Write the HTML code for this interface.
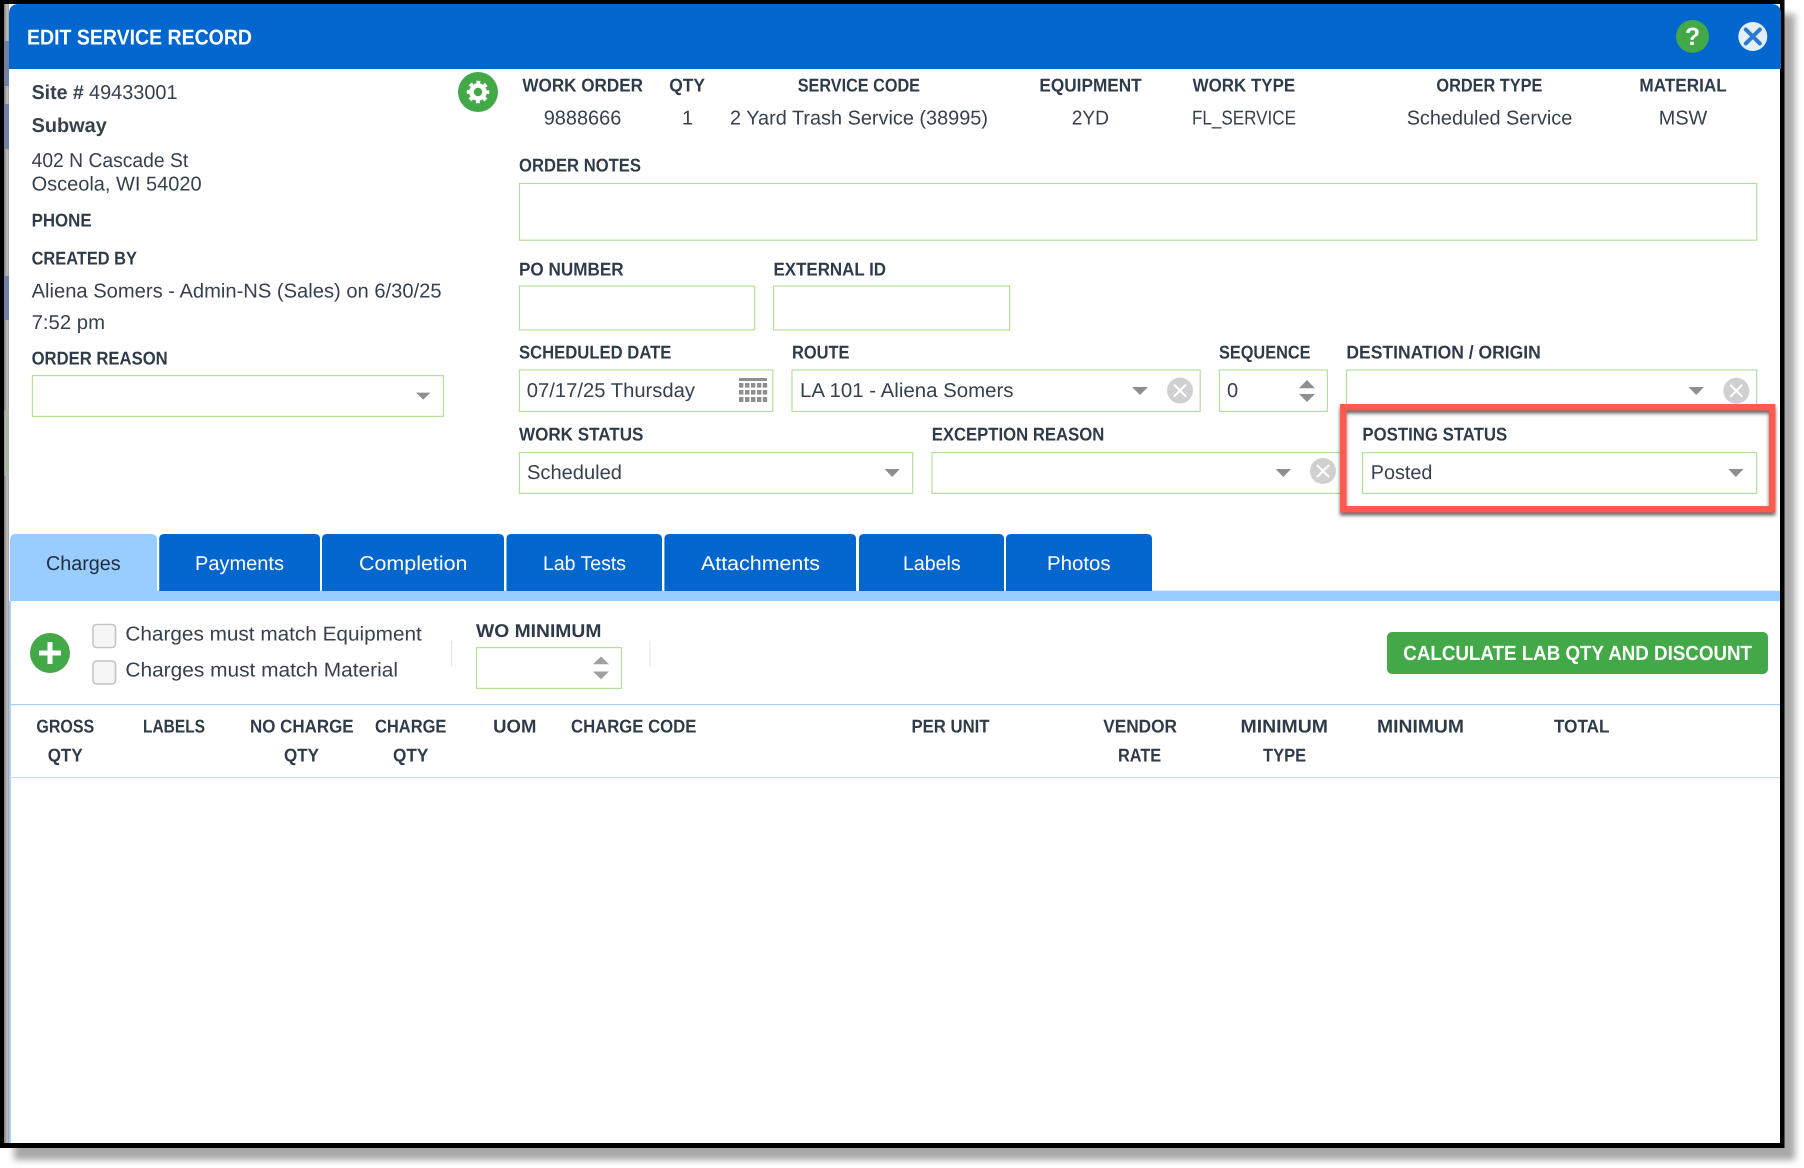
<!DOCTYPE html>
<html lang="en">
<head>
<meta charset="utf-8">
<title>Edit Service Record</title>
<style>
html,body{margin:0;padding:0;background:#fff;width:1804px;height:1168px;overflow:hidden}
svg{display:block}
text{font-family:"Liberation Sans",sans-serif;text-rendering:geometricPrecision}
.l{font-size:18.5px;font-weight:700;fill:#2f3b48}
.v{font-size:20px;fill:#36414d}
.b{font-size:20px;font-weight:700;fill:#36414d}
.t{font-size:20px;fill:#fff}
.i{fill:#fff;stroke:#b5de9f;stroke-width:1.2}
.a{fill:#8f8f8f}
.c{fill:#d0d0d0}
.x{stroke:#fff;stroke-width:2;stroke-linecap:round}
</style>
</head>
<body>
<svg xmlns="http://www.w3.org/2000/svg" width="1804" height="1168" viewBox="0 0 1804 1168">
<defs>
<filter id="blur" x="-5%" y="-5%" width="110%" height="110%"><feGaussianBlur stdDeviation="3.5"/></filter>
<filter id="ds" x="-5%" y="-10%" width="110%" height="125%"><feDropShadow dx="0" dy="3" stdDeviation="1.8" flood-color="#333" flood-opacity=".75"/></filter>
<linearGradient id="strip" x1="0" x2="1" y1="0" y2="0"><stop offset="0" stop-color="#7c7c7c"/><stop offset=".55" stop-color="#bdbdbd"/><stop offset="1" stop-color="#969696"/></linearGradient>
</defs>

<!-- outer shadow and frame -->
<rect x="14" y="14" width="1781" height="1146" fill="#a8a8a8" filter="url(#blur)"/>
<rect x="0" y="0" width="1784.5" height="1148" fill="#000"/>
<rect x="4" y="4" width="5.5" height="1139" fill="url(#strip)"/>
<rect x="4.5" y="41" width="5" height="45" fill="#6f82a4"/>
<rect x="4.5" y="104" width="5" height="45" fill="#6f82a4"/>
<rect x="4.5" y="276" width="5" height="44" fill="#6f82a4"/>
<rect x="4.5" y="410" width="5" height="66" fill="#a9b5a6"/>
<rect x="9" y="4" width="1771" height="1139" fill="#fff"/>
<rect x="9" y="601" width="2" height="542" fill="#a6d0fb"/>

<!-- header -->
<path d="M9 69V14Q9 4 19 4H1771Q1781 4 1781 14V69Z" fill="#0266cf"/>
<text x="27" y="44.5" font-size="21.5" font-weight="700" fill="#fff" textLength="225" lengthAdjust="spacingAndGlyphs">EDIT SERVICE RECORD</text>
<circle cx="1692.5" cy="36.4" r="16.5" fill="#43a847"/>
<text x="1692.5" y="45" font-size="25" font-weight="700" fill="#fff" text-anchor="middle">?</text>
<circle cx="1752.8" cy="36.5" r="14.5" fill="#e3eef9"/>
<path d="M1745.8 29.5L1759.8 43.5M1759.8 29.5L1745.8 43.5" stroke="#2a7ad2" stroke-width="4" stroke-linecap="round"/>

<!-- left column -->
<text class="b" x="31.6" y="99" textLength="52.2" lengthAdjust="spacingAndGlyphs">Site #</text>
<text class="v" x="89" y="99" textLength="88.5" lengthAdjust="spacingAndGlyphs">49433001</text>
<text class="b" x="31.6" y="132" textLength="75.2" lengthAdjust="spacingAndGlyphs">Subway</text>
<text class="v" x="31.6" y="167" textLength="156.6" lengthAdjust="spacingAndGlyphs">402 N Cascade St</text>
<text class="v" x="31.6" y="190.6" textLength="170" lengthAdjust="spacingAndGlyphs">Osceola, WI 54020</text>
<text class="l" x="31.6" y="226.7" textLength="60" lengthAdjust="spacingAndGlyphs">PHONE</text>
<text class="l" x="31.6" y="264.7" textLength="105.3" lengthAdjust="spacingAndGlyphs">CREATED BY</text>
<text class="v" x="31.6" y="297.5" textLength="410" lengthAdjust="spacingAndGlyphs">Aliena Somers - Admin-NS (Sales) on 6/30/25</text>
<text class="v" x="31.6" y="329" textLength="73.4" lengthAdjust="spacingAndGlyphs">7:52 pm</text>
<text class="l" x="31.6" y="364.7" textLength="136.1" lengthAdjust="spacingAndGlyphs">ORDER REASON</text>
<rect class="i" x="32.4" y="375.6" width="411" height="40.8"/>
<path class="a" d="M416 392.6H430.5L423.2 399.6Z"/>

<!-- gear -->
<circle cx="478" cy="92" r="20" fill="#43a847"/>
<circle cx="478" cy="92" r="6.5" fill="none" stroke="#fff" stroke-width="4.6"/>
<circle cx="478" cy="92" r="9.6" fill="none" stroke="#fff" stroke-width="3.4" stroke-dasharray="3.8 3.74" stroke-dashoffset="1.9"/>

<!-- top info row -->
<text class="l" x="522.4" y="91.7" textLength="120.6" lengthAdjust="spacingAndGlyphs">WORK ORDER</text>
<text class="l" x="669.2" y="91.7" textLength="35.8" lengthAdjust="spacingAndGlyphs">QTY</text>
<text class="l" x="797.7" y="91.7" textLength="122.3" lengthAdjust="spacingAndGlyphs">SERVICE CODE</text>
<text class="l" x="1039.4" y="91.7" textLength="102.3" lengthAdjust="spacingAndGlyphs">EQUIPMENT</text>
<text class="l" x="1192.6" y="91.7" textLength="102.6" lengthAdjust="spacingAndGlyphs">WORK TYPE</text>
<text class="l" x="1436.4" y="91.7" textLength="106" lengthAdjust="spacingAndGlyphs">ORDER TYPE</text>
<text class="l" x="1639.4" y="91.7" textLength="87.4" lengthAdjust="spacingAndGlyphs">MATERIAL</text>
<text class="v" x="543.7" y="124.7" textLength="77.6" lengthAdjust="spacingAndGlyphs">9888666</text>
<text class="v" x="682" y="124.7">1</text>
<text class="v" x="730" y="124.7" textLength="258" lengthAdjust="spacingAndGlyphs">2 Yard Trash Service (38995)</text>
<text class="v" x="1071.7" y="124.7" textLength="37.3" lengthAdjust="spacingAndGlyphs">2YD</text>
<text class="v" x="1192" y="124.7" textLength="104" lengthAdjust="spacingAndGlyphs">FL_SERVICE</text>
<text class="v" x="1406.7" y="124.7" textLength="165.6" lengthAdjust="spacingAndGlyphs">Scheduled Service</text>
<text class="v" x="1658.8" y="124.7" textLength="48.5" lengthAdjust="spacingAndGlyphs">MSW</text>

<!-- notes -->
<text class="l" x="519" y="171.7" textLength="122" lengthAdjust="spacingAndGlyphs">ORDER NOTES</text>
<rect class="i" x="519.4" y="183.4" width="1237.3" height="56.8"/>

<!-- PO / external -->
<text class="l" x="519" y="275.7" textLength="104.6" lengthAdjust="spacingAndGlyphs">PO NUMBER</text>
<rect class="i" x="519.4" y="286" width="235.3" height="44"/>
<text class="l" x="773.5" y="275.7" textLength="112.5" lengthAdjust="spacingAndGlyphs">EXTERNAL ID</text>
<rect class="i" x="773.6" y="286" width="236" height="44"/>

<!-- row: scheduled -->
<text class="l" x="519" y="358.7" textLength="152.4" lengthAdjust="spacingAndGlyphs">SCHEDULED DATE</text>
<rect class="i" x="519.4" y="370" width="253.4" height="41.4"/>
<text class="v" x="526.8" y="397" textLength="168.2" lengthAdjust="spacingAndGlyphs">07/17/25 Thursday</text>
<g fill="#8f8f8f">
<rect x="739" y="378" width="28" height="3"/>
<rect x="739" y="383" width="4.4" height="4.6"/><rect x="745" y="383" width="4.4" height="4.6"/><rect x="751" y="383" width="4.4" height="4.6"/><rect x="757" y="383" width="4.4" height="4.6"/><rect x="762.8" y="383" width="4.4" height="4.6"/>
<rect x="739" y="390" width="4.4" height="4.6"/><rect x="745" y="390" width="4.4" height="4.6"/><rect x="751" y="390" width="4.4" height="4.6"/><rect x="757" y="390" width="4.4" height="4.6"/><rect x="762.8" y="390" width="4.4" height="4.6"/>
<rect x="739" y="397" width="4.4" height="5"/><rect x="745" y="397" width="4.4" height="5"/><rect x="751" y="397" width="4.4" height="5"/><rect x="757" y="397" width="4.4" height="5"/><rect x="762.8" y="397" width="4.4" height="5"/>
</g>

<text class="l" x="792" y="358.7" textLength="57.5" lengthAdjust="spacingAndGlyphs">ROUTE</text>
<rect class="i" x="792" y="370" width="408.2" height="41.4"/>
<text class="v" x="800" y="397" textLength="213.5" lengthAdjust="spacingAndGlyphs">LA 101 - Aliena Somers</text>
<path class="a" d="M1132 387H1148L1140 395Z"/>
<circle class="c" cx="1180" cy="390.5" r="13"/>
<path class="x" d="M1174.5 385L1185.5 396M1185.5 385L1174.5 396"/>

<text class="l" x="1219" y="358.7" textLength="91.5" lengthAdjust="spacingAndGlyphs">SEQUENCE</text>
<rect class="i" x="1219.4" y="370" width="108" height="41.4"/>
<text class="v" x="1227" y="397">0</text>
<path class="a" d="M1299 388.3L1307 380L1315 388.3Z"/>
<path class="a" d="M1299 394H1315L1307 402Z"/>

<text class="l" x="1346.4" y="358.7" textLength="194.4" lengthAdjust="spacingAndGlyphs">DESTINATION / ORIGIN</text>
<rect class="i" x="1346.5" y="370" width="410.2" height="41.4"/>
<path class="a" d="M1688.5 387H1704L1696.2 395Z"/>
<circle class="c" cx="1736.3" cy="390.8" r="13"/>
<path class="x" d="M1730.8 385.3L1741.8 396.3M1741.8 385.3L1730.8 396.3"/>

<!-- row: work status -->
<text class="l" x="519" y="440.7" textLength="124.4" lengthAdjust="spacingAndGlyphs">WORK STATUS</text>
<rect class="i" x="519.4" y="452.6" width="393.3" height="40.8"/>
<text class="v" x="527" y="479" textLength="95" lengthAdjust="spacingAndGlyphs">Scheduled</text>
<path class="a" d="M884.6 469H899.8L892.2 477Z"/>

<text class="l" x="931.7" y="440.7" textLength="172.6" lengthAdjust="spacingAndGlyphs">EXCEPTION REASON</text>
<rect class="i" x="932" y="452.6" width="415" height="40.8"/>
<path class="a" d="M1275.6 469H1291L1283.3 477Z"/>
<circle class="c" cx="1323" cy="471" r="13"/>
<path class="x" d="M1317.5 465.5L1328.5 476.5M1328.5 465.5L1317.5 476.5"/>

<!-- posting status callout -->
<rect x="1343.2" y="407.2" width="429" height="102" fill="#fff"/>
<rect x="1343.2" y="407.2" width="429" height="102" fill="none" stroke="#ff5a4e" stroke-width="6.4" filter="url(#ds)"/>
<text class="l" x="1362.4" y="440.7" textLength="144.8" lengthAdjust="spacingAndGlyphs">POSTING STATUS</text>
<rect class="i" x="1362.5" y="452.6" width="394.2" height="40.8"/>
<text class="v" x="1370.8" y="479" textLength="61.6" lengthAdjust="spacingAndGlyphs">Posted</text>
<path class="a" d="M1728.3 469H1743.5L1735.9 477Z"/>

<!-- tabs -->
<rect x="10" y="590.7" width="1770" height="10.3" fill="#99ccff"/>
<path d="M10 592V540Q10 534 16 534H151Q157 534 157 540V592Z" fill="#99ccff"/>
<g fill="#0266cf">
<path d="M159.2 591V539Q159.2 534 164.2 534H315Q320 534 320 539V591Z"/>
<path d="M322 591V539Q322 534 327 534H499Q504 534 504 539V591Z"/>
<path d="M506.5 591V539Q506.5 534 511.5 534H657Q662 534 662 539V591Z"/>
<path d="M664.4 591V539Q664.4 534 669.4 534H851Q856 534 856 539V591Z"/>
<path d="M859 591V539Q859 534 864 534H999Q1004 534 1004 539V591Z"/>
<path d="M1006 591V539Q1006 534 1011 534H1147Q1152 534 1152 539V591Z"/>
</g>
<text x="46" y="570" font-size="20" fill="#1f2c3c" textLength="74.6" lengthAdjust="spacingAndGlyphs">Charges</text>
<text class="t" x="195" y="570" textLength="89" lengthAdjust="spacingAndGlyphs">Payments</text>
<text class="t" x="359" y="570" textLength="108.5" lengthAdjust="spacingAndGlyphs">Completion</text>
<text class="t" x="543" y="570" textLength="83" lengthAdjust="spacingAndGlyphs">Lab Tests</text>
<text class="t" x="701" y="570" textLength="119" lengthAdjust="spacingAndGlyphs">Attachments</text>
<text class="t" x="903" y="570" textLength="57.6" lengthAdjust="spacingAndGlyphs">Labels</text>
<text class="t" x="1047" y="570" textLength="63.6" lengthAdjust="spacingAndGlyphs">Photos</text>

<!-- charges toolbar -->
<circle cx="50" cy="653" r="20" fill="#43a847"/>
<path d="M39 653H61M50 642V664" stroke="#fff" stroke-width="5"/>
<rect x="93" y="624.5" width="22.5" height="23" rx="3.5" fill="#f6f6f6" stroke="#c4c4c4" stroke-width="1.6"/>
<rect x="93" y="661" width="22.5" height="23" rx="3.5" fill="#f6f6f6" stroke="#c4c4c4" stroke-width="1.6"/>
<text class="v" x="125.4" y="640.7" textLength="296.4" lengthAdjust="spacingAndGlyphs">Charges must match Equipment</text>
<text class="v" x="125.4" y="676.7" textLength="272.6" lengthAdjust="spacingAndGlyphs">Charges must match Material</text>
<rect x="451" y="641" width="1" height="25" fill="#e2e2e2"/>
<rect x="649.5" y="641" width="1" height="25" fill="#e2e2e2"/>
<text class="l" x="476" y="637" textLength="125.4" lengthAdjust="spacingAndGlyphs">WO MINIMUM</text>
<rect class="i" x="476.5" y="647.6" width="145" height="40.8"/>
<path class="a" d="M593 664.3L601 656.5L609 664.3Z" fill-opacity=".85"/>
<path class="a" d="M593 671.5H609L601 679.3Z" fill-opacity=".85"/>

<rect x="1387" y="632" width="381" height="42" rx="5" fill="#43a847"/>
<text x="1403.3" y="660" font-size="20.5" font-weight="700" fill="#fff" textLength="348.7" lengthAdjust="spacingAndGlyphs">CALCULATE LAB QTY AND DISCOUNT</text>

<!-- table header -->
<rect x="10" y="704" width="1770" height="1.2" fill="#a6d0fb"/>
<rect x="10" y="777" width="1770" height="1.2" fill="#c2dcf6"/>
<text class="l" x="36.4" y="732.7" textLength="57.8" lengthAdjust="spacingAndGlyphs">GROSS</text>
<text class="l" x="47.7" y="761.7" textLength="35" lengthAdjust="spacingAndGlyphs">QTY</text>
<text class="l" x="143" y="732.7" textLength="62" lengthAdjust="spacingAndGlyphs">LABELS</text>
<text class="l" x="250" y="732.7" textLength="103.6" lengthAdjust="spacingAndGlyphs">NO CHARGE</text>
<text class="l" x="284" y="761.7" textLength="35" lengthAdjust="spacingAndGlyphs">QTY</text>
<text class="l" x="375" y="732.7" textLength="71.4" lengthAdjust="spacingAndGlyphs">CHARGE</text>
<text class="l" x="393" y="761.7" textLength="35.4" lengthAdjust="spacingAndGlyphs">QTY</text>
<text class="l" x="493.2" y="732.7" textLength="43.2" lengthAdjust="spacingAndGlyphs">UOM</text>
<text class="l" x="571" y="732.7" textLength="125.4" lengthAdjust="spacingAndGlyphs">CHARGE CODE</text>
<text class="l" x="911.5" y="732.7" textLength="78" lengthAdjust="spacingAndGlyphs">PER UNIT</text>
<text class="l" x="1103.2" y="732.7" textLength="73.8" lengthAdjust="spacingAndGlyphs">VENDOR</text>
<text class="l" x="1118" y="761.7" textLength="43.2" lengthAdjust="spacingAndGlyphs">RATE</text>
<text class="l" x="1240.5" y="732.7" textLength="87.5" lengthAdjust="spacingAndGlyphs">MINIMUM</text>
<text class="l" x="1263" y="761.7" textLength="43.2" lengthAdjust="spacingAndGlyphs">TYPE</text>
<text class="l" x="1377" y="732.7" textLength="87" lengthAdjust="spacingAndGlyphs">MINIMUM</text>
<text class="l" x="1554" y="732.7" textLength="55.5" lengthAdjust="spacingAndGlyphs">TOTAL</text>
</svg>
</body>
</html>
